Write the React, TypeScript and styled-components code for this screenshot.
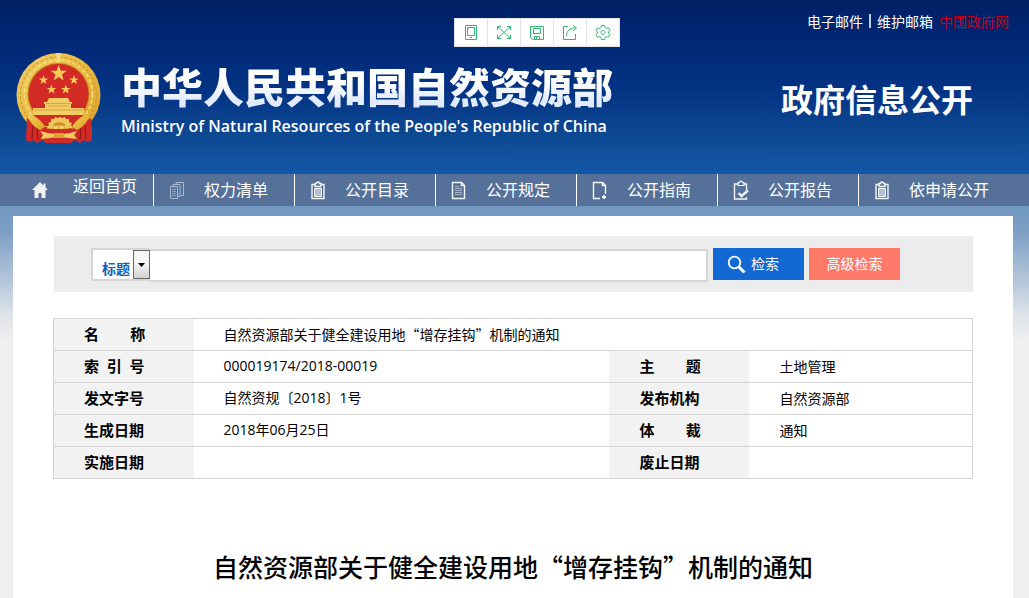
import React from "react";
import styled, { createGlobalStyle } from "styled-components";

const GlobalStyle = createGlobalStyle`
  * { box-sizing: border-box; }
  body {
    margin: 0;
    background: #efefef;
    color: #000;
    font: 14px/20px "Noto Sans CJK SC", sans-serif;
  }
  a { color: inherit; text-decoration: none; }
`;

const Page = styled.div`
  display: flex;
  flex-direction: column;
  min-height: 100vh;
`;

const Header = styled.header`
  position: relative;
  display: flex;
  flex-direction: column;
  height: 174px;
  padding: 11px 20px 0 16px;
  color: #fff;
  background: linear-gradient(#001f65 0, #012a78 50px, #033384 90px, #0c4690 130px, #1453a0 160px, #1158ab 174px);
`;

const TopLinks = styled.nav`
  display: flex;
  align-items: center;
  justify-content: flex-end;
  gap: 6px;
  height: 20px;
`;

const Divider = styled.span`
  width: 2px;
  height: 14px;
  background: #c3cde0;
`;

const RedLink = styled.a`
  color: #c4001c;
`;

const Brand = styled.div`
  display: flex;
  align-items: flex-start;
  margin-top: 22px;
`;

const BrandText = styled.div`
  margin: 9px 0 0 20px;
  white-space: nowrap;
`;

const SiteName = styled.h1`
  margin: 0;
  font-size: 41px;
  line-height: 46px;
  font-weight: 900;
  color: transparent;
  background: linear-gradient(#fff 40%, #e2ebfd 85%);
  background-clip: text;
`;

const EnglishName = styled.p`
  margin: 7px 0 0;
  font: 600 16px/22px "Open Sans", sans-serif;
`;

const SectionName = styled.h2`
  margin: 21px 36px 0 auto;
  font-size: 32px;
  line-height: 48px;
  font-weight: 700;
  white-space: nowrap;
`;

const Toolbar = styled.div`
  position: absolute;
  top: 18px;
  left: 454px;
  display: flex;
  background: #fff;
  border: 1px solid #e4e4e4;
`;

const ToolButton = styled.button`
  display: grid;
  place-items: center;
  width: 33px;
  height: 27px;
  padding: 0;
  border: 0;
  border-right: 1px solid #e2e6e6;
  background: none;
  color: #35b573;
  &:last-child { width: 32px; border-right: 0; }
`;

const NavBar = styled.nav`
  padding: 0 16px 0 13px;
  background: #567199;
`;

const NavList = styled.ul`
  display: grid;
  grid-template-columns: repeat(6, 141px) 1fr;
  margin: 0;
  padding: 0;
  list-style: none;
`;

const NavItem = styled.li<{ $home?: boolean }>`
  height: 32px;
  padding-left: ${(p) => (p.$home ? 18 : 14)}px;
  border-right: 1px solid #fff;
  &:last-child { border-right: 0; }
  a {
    display: flex;
    align-items: center;
    gap: ${(p) => (p.$home ? 24 : 18)}px;
    height: 32px;
    color: #fff;
    font-size: 16px;
    line-height: 22px;
    white-space: nowrap;
  }
  span { padding-bottom: ${(p) => (p.$home ? 10 : 2)}px; }
`;

const Main = styled.main`
  display: flex;
  flex: 1;
  padding: 10px 16px 0 13px;
  background: linear-gradient(#7096c0 0, #7d9fc5 25px, #b4c6da 75px, #dfe4ea 110px, #efefef 135px);
`;

const Sheet = styled.div`
  flex: 1;
  padding: 20px 40px 0;
  background: #fff;
`;

const SearchForm = styled.form`
  display: flex;
  align-items: flex-start;
  height: 56px;
  margin-left: 1px;
  padding: 12px 73px 0 37px;
  background: #ececec;
`;

const FieldPicker = styled.div`
  position: relative;
  width: 59px;
  height: 33px;
  border: 2px solid #d6d6d6;
  border-right: 0;
  background: #fff;
`;

const FieldSelect = styled.select`
  appearance: none;
  width: 100%;
  height: 29px;
  padding: 6px 0 0 9px;
  border: 0;
  outline: 0;
  background: none;
  color: #0f63b4;
  font: 700 14px/20px "Noto Sans CJK SC", sans-serif;
`;

const PickerArrow = styled.span`
  position: absolute;
  top: 0;
  right: 0;
  display: grid;
  place-items: center;
  width: 17px;
  height: 29px;
  border: 1px solid #666;
  background: linear-gradient(#f5f5f5 45%, #d2d2d2);
  pointer-events: none;
`;

const Keyword = styled.input`
  flex: 1;
  min-width: 0;
  height: 33px;
  margin: 1px 5px 0 0;
  padding: 0 8px;
  border: 2px solid #d6d6d6;
  border-left: 0;
  background: #fff;
`;

const SearchButton = styled.button<{ $tone: string }>`
  display: flex;
  align-items: center;
  justify-content: center;
  gap: 5px;
  width: 91px;
  height: 32px;
  margin-right: 5px;
  padding: 0 0 2px;
  border: 0;
  background: ${(p) => p.$tone};
  color: #fff;
  font: 14px/20px "Noto Sans CJK SC", sans-serif;
  &:last-child { margin-right: 0; }
`;

const PrimaryButton = styled(SearchButton)`
  padding-right: 11px;
`;

const InfoTable = styled.table`
  width: 100%;
  margin-top: 26px;
  border-collapse: collapse;
  table-layout: fixed;
  border: 1px solid #d4d4d4;
  tr { height: 32px; border-bottom: 1px solid #d4d4d4; }
`;

const LabelCell = styled.th`
  padding: 0 0 2px 30px;
  background: #f2f2f2;
  font: 700 15px/20px "Open Sans", "Noto Sans CJK SC", sans-serif;
  text-align: left;
  white-space: pre;
`;

const ValueCell = styled.td`
  padding: 0 0 2px 30px;
`;

const Figures = styled.span`
  font-family: "Open Sans", "Noto Sans CJK SC", sans-serif;
`;

const DocTitle = styled.h2`
  margin: 68px 0 0;
  font: 500 25px/38px "Noto Sans CJK SC", sans-serif;
  text-align: center;
`;

const star = (cx: number, cy: number, r: number) =>
  Array.from({ length: 10 }, (_, i) => {
    const a = (Math.PI / 5) * i - Math.PI / 2;
    const d = i % 2 ? r * 0.4 : r;
    return `${(cx + d * Math.cos(a)).toFixed(2)},${(cy + d * Math.sin(a)).toFixed(2)}`;
  }).join(" ");

const Emblem = () => (
  <svg width="85" height="91" viewBox="0 0 85 91" role="img" aria-label="国徽">
    <defs>
      <linearGradient id="gold" x1="0" y1="0" x2="1" y2="1">
        <stop offset="0" stopColor="#f0cf6a" />
        <stop offset="0.5" stopColor="#e8b93c" />
        <stop offset="1" stopColor="#d9a02c" />
      </linearGradient>
    </defs>
    <path d="M13 62 10 86l4 2 4-2 4 3 5-3 4 4h23l4-4 5 3 4-3 4 2 4-2-3-24z" fill="#c9231f" />
    <circle cx="42.5" cy="42" r="42" fill="url(#gold)" />
    <circle cx="42.5" cy="42" r="38" fill="none" stroke="#cf9c31" strokeWidth="1.2" strokeDasharray="3 2" />
    <circle cx="42.5" cy="41" r="34" fill="none" stroke="#f6dd88" strokeWidth="1.5" strokeDasharray="4 2" />
    <path d="M40 0h5l-1 9h-3z" fill="#f6dc83" />
    <circle cx="42.5" cy="41" r="31" fill="#c9821f" />
    <circle cx="42.5" cy="41" r="30" fill="#d22b26" />
    <g fill="#f3cd5a">
      <polygon points={star(42.7, 20.5, 8.5)} />
      <polygon points={star(27.5, 27, 5)} />
      <polygon points={star(58, 27, 5)} />
      <polygon points={star(35.5, 36.5, 5)} />
      <polygon points={star(49.8, 36.5, 5)} />
    </g>
    <path d="M33 45h19l2 4h2v2h-1v4h13v7H17v-7h12v-4h-1v-2h3z" fill="#f2cd66" />
    <path d="M30 50.5h25M18 57h49M32 53h21" stroke="#d09a35" strokeWidth="0.8" />
    <path d="M17 62h51l-6 11H23z" fill="#d22b26" />
    <path d="M11 65c8 4 12 7 17 8l6 3h18l6-3c5-1 9-4 17-8l1 12 0 10-4 2-4-2-4 3-5-3-4 3H30l-4-3-5 3-4-3-4 2-3-2z" fill="#d22b26" />
    <path d="M17 73l-1 13M21 75l1 12M65 75l-1 12M69 73l1 13" stroke="#941816" strokeWidth="1.2" fill="none" />
    <path d="M12 60c8 3 14 8 17 14l-5 3c-6-3-9-7-12-12z" fill="url(#gold)" />
    <path d="M73 60c-8 3-14 8-17 14l5 3c6-3 9-7 12-12z" fill="url(#gold)" />
    <path d="M31 76l2-4-1-2 3-1 0-3 3 0 1-2 3 1 2-1 2 1 3-1 1 2 3 0 0 3 3 1-1 2 2 4c-8-3-18-3-26 0z" fill="#efc75b" />
    <path d="M37 73c1-5 11-5 13 0-4-1-9-1-13 0z" fill="#c98e28" />
    <path d="M24 78l8 2 7 1h8l7-1 7-2-3 4 3 4-9-1-6-1h-6l-6 1-9 1 2-4z" fill="#f0ca5e" />
    <path d="M38 80h10v5H38z" fill="#d9a435" />
  </svg>
);

const IconSvg = ({ children }: { children: React.ReactNode }) => (
  <svg width="18" height="20" viewBox="0 0 18 20" fill="none" stroke="#f2f5f9" strokeWidth="1.4" aria-hidden="true">
    {children}
  </svg>
);

const HomeIcon = () => (
  <IconSvg>
    <path d="M9 2 1 10h2.500v8h4v-5h3v5h4v-8H17L14.500 7.500V3.500h-2v2z" fill="#f0f0f0" stroke="none" />
  </IconSvg>
);
const StackIcon = () => (
  <IconSvg>
    <g strokeWidth="1" stroke="#a9b8ce">
      <path d="M2.500 6.500h7v12h-7zM5 6V4.500h7v12h-2M8 4V2.500h7.500v13H13" />
      <path d="M4 9.500h4M4 11.500h4M4 13.500h4M4 15.500h4" opacity="0.7" />
    </g>
  </IconSvg>
);
const ClipboardIcon = () => (
  <IconSvg>
    <path d="M3 4.500h12v14H3z" />
    <path d="M6 3.500h1.500a1.500 1.500 0 0 1 3 0H12v3H6z" fill="#567199" />
    <path d="M5.500 8.500h7v8h-7z" fill="#b4c1d4" strokeWidth="1" />
  </IconSvg>
);
const DocumentIcon = () => (
  <IconSvg>
    <path d="M2.500 2.500h9l3 3v13h-12z" />
    <path d="M11.500 2.500v3h3" />
    <path d="M5 6.500h4M5 8.500h7M5 10.500h7M5 12.500h7M5 14.500h7" strokeWidth="1" stroke="#a5b5cc" />
  </IconSvg>
);
const GuideIcon = () => (
  <IconSvg>
    <path d="M9 18.500H2.500v-16h9l3 3V14" />
    <path d="M11.500 2.500v3h3" />
    <path d="M13 15v4M11 17h4" strokeWidth="1.800" />
  </IconSvg>
);
const ReportIcon = () => (
  <IconSvg>
    <path d="M6 4H2.500v15h12v-2M12 4h2.500v6" />
    <path d="M6 2.700h1.500a1.500 1.500 0 0 1 3 0H12v2.800H6z" strokeWidth="1.200" />
    <path d="m6.500 13 3 3L16 10.500" strokeWidth="2.400" />
  </IconSvg>
);

const navItems = [
  { label: "返回首页", Icon: HomeIcon, home: true },
  { label: "权力清单", Icon: StackIcon },
  { label: "公开目录", Icon: ClipboardIcon },
  { label: "公开规定", Icon: DocumentIcon },
  { label: "公开指南", Icon: GuideIcon },
  { label: "公开报告", Icon: ReportIcon },
  { label: "依申请公开", Icon: ClipboardIcon },
];

const tools = [
  { label: "手机", path: "M2.500 1.500h11v14h-11zM4.500 3.500h7v8h-7zM7 13.500h2" },
  { label: "全屏", path: "M1.500 6V2.500H5M11 2.500h3.500V6M14.500 11v3.500H11M5 14.500H1.500V11M2 3l12 11M14 3 2 14" },
  { label: "保存", path: "M1.500 2.500h13v13h-11l-2-2zM4.500 4.500h7v5h-7zM5.500 15.500v-3h5v3M7.500 13v2" },
  { label: "分享", path: "M6 2.500H1.500v13h12V10M4.500 12c0-5 3-8 9-8M11 1.500 14.500 4 11 7" },
  {
    label: "设置",
    path: "M6.500 1.500h3l.5 2 1.500.9 2-.6 1.500 2.600L13.500 8v1l1.500 1.600-1.500 2.600-2-.6-1.500.9-.5 2h-3l-.5-2-1.500-.9-2 .6L1 10.600 2.500 9V8L1 6.400l1.500-2.600 2 .6L6 3.500zM8 6.500a2 2 0 1 0 .01 0z",
  },
];

const App = () => (
  <>
    <GlobalStyle />
    <Page>
      <Header>
        <TopLinks>
          <a href="#mail">电子邮件</a>
          <Divider />
          <a href="#maintain">维护邮箱</a>
          <RedLink href="#gov">中国政府网</RedLink>
        </TopLinks>
        <Brand>
          <Emblem />
          <BrandText>
            <SiteName>中华人民共和国自然资源部</SiteName>
            <EnglishName>Ministry of Natural Resources of the People's Republic of China</EnglishName>
          </BrandText>
          <SectionName>政府信息公开</SectionName>
        </Brand>
        <Toolbar>
          {tools.map((t) => (
            <ToolButton key={t.label} type="button" aria-label={t.label}>
              <svg width="16" height="17" viewBox="0 0 16 17" fill="none" stroke="currentColor" aria-hidden="true">
                <path d={t.path} />
              </svg>
            </ToolButton>
          ))}
        </Toolbar>
      </Header>
      <NavBar>
        <NavList>
          {navItems.map(({ label, Icon, home }) => (
            <NavItem key={label} $home={home}>
              <a href="#nav">
                <Icon />
                <span>{label}</span>
              </a>
            </NavItem>
          ))}
        </NavList>
      </NavBar>
      <Main>
        <Sheet>
          <SearchForm onSubmit={(e) => e.preventDefault()}>
            <FieldPicker>
              <FieldSelect aria-label="检索字段">
                <option>标题</option>
              </FieldSelect>
              <PickerArrow>
                <svg width="7" height="4" viewBox="0 0 7 4" aria-hidden="true">
                  <path d="M0 0h7L3.500 4z" fill="#000" />
                </svg>
              </PickerArrow>
            </FieldPicker>
            <Keyword type="text" aria-label="关键词" />
            <PrimaryButton $tone="#1269d3" type="submit">
              <svg width="19" height="19" viewBox="0 0 19 19" fill="none" stroke="#fff" aria-hidden="true">
                <circle cx="7.500" cy="8.500" r="5.800" strokeWidth="1.800" />
                <path d="m12 13 5.500 5.500" strokeWidth="3" />
              </svg>
              检索
            </PrimaryButton>
            <SearchButton $tone="#ff7a68" type="button">高级检索</SearchButton>
          </SearchForm>
          <InfoTable>
            <colgroup>
              <col style={{ width: 140 }} />
              <col />
              <col style={{ width: 140 }} />
              <col style={{ width: 223 }} />
            </colgroup>
            <tbody>
              <tr>
                <LabelCell scope="row">{"名        称"}</LabelCell>
                <ValueCell colSpan={3}>自然资源部关于健全建设用地“增存挂钩”机制的通知</ValueCell>
              </tr>
              <tr>
                <LabelCell scope="row">{"索  引  号"}</LabelCell>
                <ValueCell><Figures>000019174/2018-00019</Figures></ValueCell>
                <LabelCell scope="row">{"主        题"}</LabelCell>
                <ValueCell>土地管理</ValueCell>
              </tr>
              <tr>
                <LabelCell scope="row">发文字号</LabelCell>
                <ValueCell><Figures>自然资规〔2018〕1号</Figures></ValueCell>
                <LabelCell scope="row">发布机构</LabelCell>
                <ValueCell>自然资源部</ValueCell>
              </tr>
              <tr>
                <LabelCell scope="row">生成日期</LabelCell>
                <ValueCell><Figures>2018年06月25日</Figures></ValueCell>
                <LabelCell scope="row">{"体        裁"}</LabelCell>
                <ValueCell>通知</ValueCell>
              </tr>
              <tr>
                <LabelCell scope="row">实施日期</LabelCell>
                <ValueCell />
                <LabelCell scope="row">废止日期</LabelCell>
                <ValueCell />
              </tr>
            </tbody>
          </InfoTable>
          <DocTitle>自然资源部关于健全建设用地“增存挂钩”机制的通知</DocTitle>
        </Sheet>
      </Main>
    </Page>
  </>
);

export default App;
